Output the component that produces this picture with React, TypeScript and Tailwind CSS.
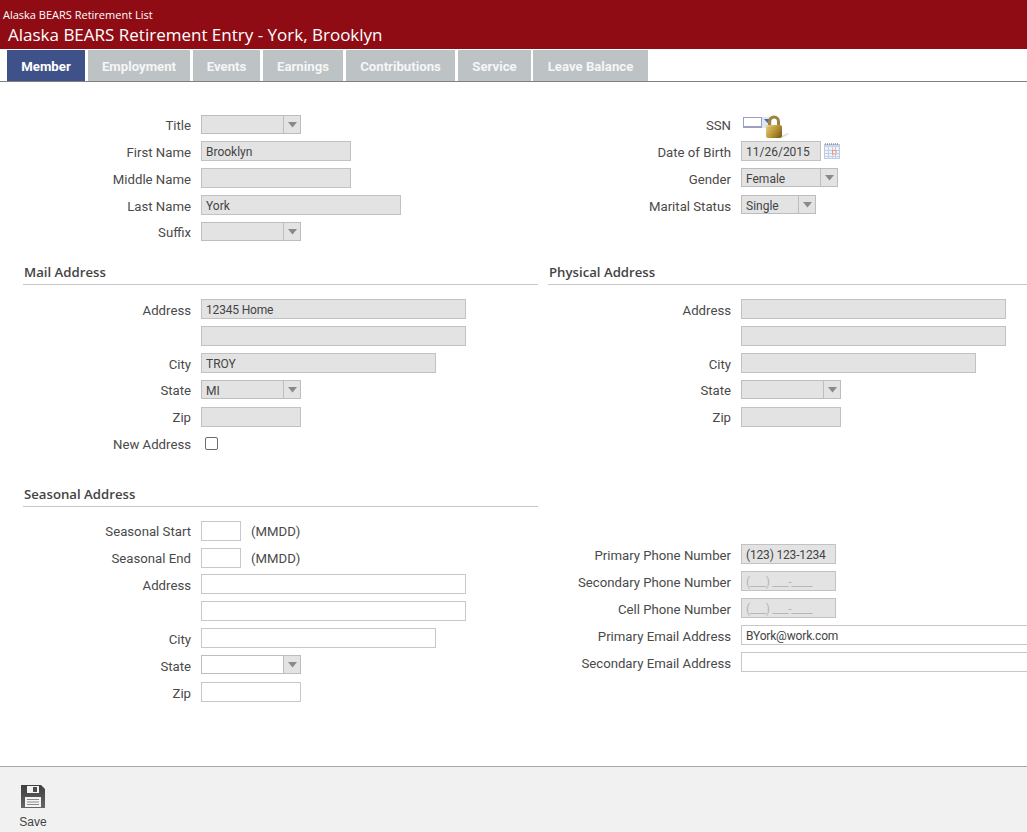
import React from "react";

const labelLeft = "w-[191px] mr-[10px] shrink-0 text-right";
const labelRight = "w-[183px] mr-[10px] shrink-0 text-right";

function Row({ label, side, h = "h-[27px]", lp = "pt-[2px]", children }: { label: string; side: "l" | "r"; h?: string; lp?: string; children: React.ReactNode }) {
  return (
    <div className={`flex items-start ${h}`}>
      <div className={`${side === "l" ? labelLeft : labelRight} ${lp} text-[13.2px] leading-[20px] text-[#4a4a4a] whitespace-nowrap`}>{label}</div>
      {children}
    </div>
  );
}

function Field({ w, value, disabled = true, muted = false, tight = false }: { w: string; value?: string; disabled?: boolean; muted?: boolean; tight?: boolean }) {
  return (
    <div
      className={`${w} h-[20px] shrink-0 border px-1 text-[12px] leading-[21px] whitespace-nowrap overflow-hidden ${
        disabled ? "bg-[#e3e3e3] border-[#c2c2c2]" : "bg-white border-[#c8c8c8]"
      } ${muted ? "text-[#b5b5b5]" : "text-[#444444]"} ${tight ? "tracking-[-0.17px]" : ""}`}
    >
      {value}
    </div>
  );
}

function Select({ w, value, disabled = true }: { w: string; value?: string; disabled?: boolean }) {
  return (
    <div className={`${w} h-[19px] shrink-0 flex border border-[#bdbdbd] text-[12px] leading-[21px] text-[#444444] ${disabled ? "bg-[#e3e3e3]" : "bg-white"}`}>
      <div className="flex-1 px-1 overflow-hidden">{value}</div>
      <div className="w-[17px] h-full bg-[#e3e3e3] border-l border-[#bdbdbd] flex items-center justify-center">
        <svg width="9" height="6" viewBox="0 0 9 6"><path d="M0 0h9L4.5 5.5z" fill="#8a8a8a" /></svg>
      </div>
    </div>
  );
}

function Heading({ children, h }: { children: React.ReactNode; h: string }) {
  return (
    <div className={`${h} flex items-end border-b border-[#c8c8c8]`}>
      <div className="pl-px pb-[3px] text-[13.2px] leading-[18px] font-semibold text-[#444444] font-['Open_Sans',sans-serif]">{children}</div>
    </div>
  );
}

function Lock() {
  return (
    <svg width="24" height="24" viewBox="0 0 24 24" className="absolute left-[22px] top-[-2px]">
      <defs>
        <linearGradient id="lockBody" x1="0" x2="1" y1="0" y2="0.6">
          <stop offset="0" stopColor="#e9d78c" />
          <stop offset="0.55" stopColor="#c19c3a" />
          <stop offset="1" stopColor="#86641c" />
        </linearGradient>
      </defs>
      <path d="M16 21l7-3 1 1-7 4z" fill="#cfcfcf" opacity="0.7" />
      <path d="M4.5 11V6.5a4.5 4.5 0 0 1 9 0V11" fill="none" stroke="#9c8242" strokeWidth="3" />
      <rect x="1" y="10" width="16" height="13" rx="2" fill="url(#lockBody)" />
      <path d="M2.5 13h13M2.5 16h13M2.5 19h13" stroke="#a98a34" strokeWidth="0.6" opacity="0.6" />
    </svg>
  );
}

function Calendar() {
  return (
    <svg width="16" height="16" viewBox="0 0 16 16" className="ml-[3px] mt-[2px]">
      <rect x="0.5" y="1.5" width="15" height="14" fill="#eef3fb" stroke="#bccbe4" />
      <path d="M1 1h14" stroke="#8d8d8d" strokeWidth="1.4" strokeDasharray="1 1" />
      <rect x="1" y="2" width="14" height="2" fill="#cdd6e6" />
      <path d="M1 7.5h14M1 10.5h14M1 13.5h14M4.5 4v11M8.5 4v11M11.5 4v11" stroke="#c3d0ea" strokeWidth="1" />
      <rect x="8.5" y="7.5" width="3.5" height="3.5" fill="#fbeee8" stroke="#e59a84" />
    </svg>
  );
}

function SaveIcon() {
  return (
    <svg width="24" height="23" viewBox="0 0 24 23">
      <defs>
        <linearGradient id="disk" x1="0" x2="0" y1="0" y2="1">
          <stop offset="0" stopColor="#3f3f3f" />
          <stop offset="1" stopColor="#666666" />
        </linearGradient>
      </defs>
      <path d="M0 0h20l4 4v19H0z" fill="url(#disk)" />
      <rect x="6" y="1" width="12" height="7" fill="#f4f4f4" />
      <rect x="12" y="2" width="4" height="5" fill="#4d4d4d" />
      <rect x="4" y="12" width="16" height="10" fill="#f4f4f4" />
      <path d="M6 14.5h12M6 17h12M6 19.5h12" stroke="#8a8a8a" strokeWidth="1.2" />
    </svg>
  );
}

const tabs: [string, string][] = [
  ["Employment", "w-[102px]"],
  ["Events", "w-[67px]"],
  ["Earnings", "w-[80px]"],
  ["Contributions", "w-[109px]"],
  ["Service", "w-[73px]"],
  ["Leave Balance", "w-[115px] -ml-px"],
];

export default function App() {
  return (
    <div className="h-screen flex flex-col overflow-hidden bg-white font-['Roboto',sans-serif]">
      <header className="h-[49px] shrink-0 bg-[#8f0c15] text-white font-['Open_Sans',sans-serif]">
        <div className="pl-[3px] pt-[7px] text-[11px] leading-[16px] whitespace-nowrap">Alaska BEARS Retirement List</div>
        <div className="pl-[8px] text-[17px] leading-[24px] whitespace-nowrap">Alaska BEARS Retirement Entry - York, Brooklyn</div>
      </header>

      <nav className="h-[33px] shrink-0 pt-px pl-[7px] flex gap-[3px] border-b border-[#808080]">
        <div className="w-[78px] pt-[2px] bg-[#3f5189] text-white font-bold text-[13.2px] flex items-center justify-center">Member</div>
        {tabs.map(([t, w]) => (
          <div key={t} className={`${w} pt-[2px] bg-[#bdc3c5] text-[#f5f6f6] font-bold text-[13.2px] flex items-center justify-center`}>{t}</div>
        ))}
      </nav>

      <main className="flex-1 min-h-0 overflow-hidden">
        <div className="flex pt-[33px]">
          <div className="w-[538px] shrink-0">
            <Row label="Title" side="l" h="h-[26px]" lp="pt-px"><Select w="w-[100px]" /></Row>
            <Row label="First Name" side="l"><Field w="w-[150px]" value="Brooklyn" /></Row>
            <Row label="Middle Name" side="l"><Field w="w-[150px]" /></Row>
            <Row label="Last Name" side="l"><Field w="w-[200px]" value="York" /></Row>
            <Row label="Suffix" side="l" lp="pt-px"><Select w="w-[100px]" /></Row>
          </div>
          <div className="flex-1 pl-[10px]">
            <Row label="SSN" side="r" h="h-[26px]" lp="pt-px">
              <div className="relative w-[44px] h-[12px] mt-[2px] ml-[2px] flex">
                <div className="w-[19px] h-[11px] border border-[#9aa0c0] border-b-2 bg-white" />
                <div className="w-[10px] h-[11px] bg-[#dfe6f4] flex justify-center pt-[2px]">
                  <svg width="7" height="4" viewBox="0 0 7 4"><path d="M0 0h7L3.5 4z" fill="#5a6a8a" /></svg>
                </div>
                <Lock />
              </div>
            </Row>
            <Row label="Date of Birth" side="r"><Field w="w-[80px]" value="11/26/2015" /><Calendar /></Row>
            <Row label="Gender" side="r"><Select w="w-[97px]" value="Female" /></Row>
            <Row label="Marital Status" side="r"><Select w="w-[75px]" value="Single" /></Row>
          </div>
        </div>

        <div className="flex">
          <div className="w-[538px] shrink-0">
            <div className="pl-[23px]"><Heading h="h-[36px]">Mail Address</Heading></div>
            <div className="pt-[14px]">
              <Row label="Address" side="l"><Field w="w-[265px]" value="12345 Home" tight /></Row>
              <Row label="" side="l"><Field w="w-[265px]" /></Row>
              <Row label="City" side="l"><Field w="w-[235px]" value="TROY" /></Row>
              <Row label="State" side="l" lp="pt-px"><Select w="w-[100px]" value="MI" /></Row>
              <Row label="Zip" side="l" lp="pt-px"><Field w="w-[100px]" /></Row>
              <Row label="New Address" side="l" lp="pt-px">
                <div className="w-[13px] h-[13px] ml-[4px] mt-[3px] border border-[#6b6b6b] rounded-[2px] bg-white" />
              </Row>
            </div>
          </div>
          <div className="flex-1 pl-[10px]">
            <Heading h="h-[36px]">Physical Address</Heading>
            <div className="pt-[14px]">
              <Row label="Address" side="r"><Field w="w-[265px]" /></Row>
              <Row label="" side="r"><Field w="w-[265px]" /></Row>
              <Row label="City" side="r"><Field w="w-[235px]" /></Row>
              <Row label="State" side="r" lp="pt-px"><Select w="w-[100px]" /></Row>
              <Row label="Zip" side="r" lp="pt-px"><Field w="w-[100px]" /></Row>
            </div>
          </div>
        </div>

        <div className="flex">
          <div className="w-[538px] shrink-0">
            <div className="pl-[23px]"><Heading h="h-[46px]">Seasonal Address</Heading></div>
            <div className="pt-[14px]">
              <Row label="Seasonal Start" side="l" lp="pt-px"><Field w="w-[40px]" disabled={false} /><span className="ml-[10px] text-[13.2px] leading-[20px] pt-px text-[#4a4a4a]">(MMDD)</span></Row>
              <Row label="Seasonal End" side="l" h="h-[26px]" lp="pt-px"><Field w="w-[40px]" disabled={false} /><span className="ml-[10px] text-[13.2px] leading-[20px] pt-px text-[#4a4a4a]">(MMDD)</span></Row>
              <Row label="Address" side="l"><Field w="w-[265px]" disabled={false} /></Row>
              <Row label="" side="l"><Field w="w-[265px]" disabled={false} /></Row>
              <Row label="City" side="l"><Field w="w-[235px]" disabled={false} /></Row>
              <Row label="State" side="l"><Select w="w-[100px]" disabled={false} /></Row>
              <Row label="Zip" side="l"><Field w="w-[100px]" disabled={false} /></Row>
            </div>
          </div>
          <div className="flex-1 min-w-0 pl-[10px] pt-[83px]">
            <Row label="Primary Phone Number" side="r"><Field w="w-[95px]" value="(123) 123-1234" tight /></Row>
            <Row label="Secondary Phone Number" side="r"><Field w="w-[95px]" value="(___) ___-____" muted tight /></Row>
            <Row label="Cell Phone Number" side="r"><Field w="w-[95px]" value="(___) ___-____" muted tight /></Row>
            <Row label="Primary Email Address" side="r"><Field w="w-[300px]" value="BYork@work.com" disabled={false} tight /></Row>
            <Row label="Secondary Email Address" side="r"><Field w="w-[300px]" disabled={false} /></Row>
          </div>
        </div>
      </main>

      <footer className="h-[66px] shrink-0 bg-[#f1f1f1] border-t border-[#a9a9a9]">
        <div className="w-[66px] flex flex-col items-center pt-[18px]">
          <SaveIcon />
          <div className="mt-[7px] text-[12px] leading-[14px] text-[#444444] font-['Liberation_Sans',sans-serif]">Save</div>
        </div>
      </footer>
    </div>
  );
}
